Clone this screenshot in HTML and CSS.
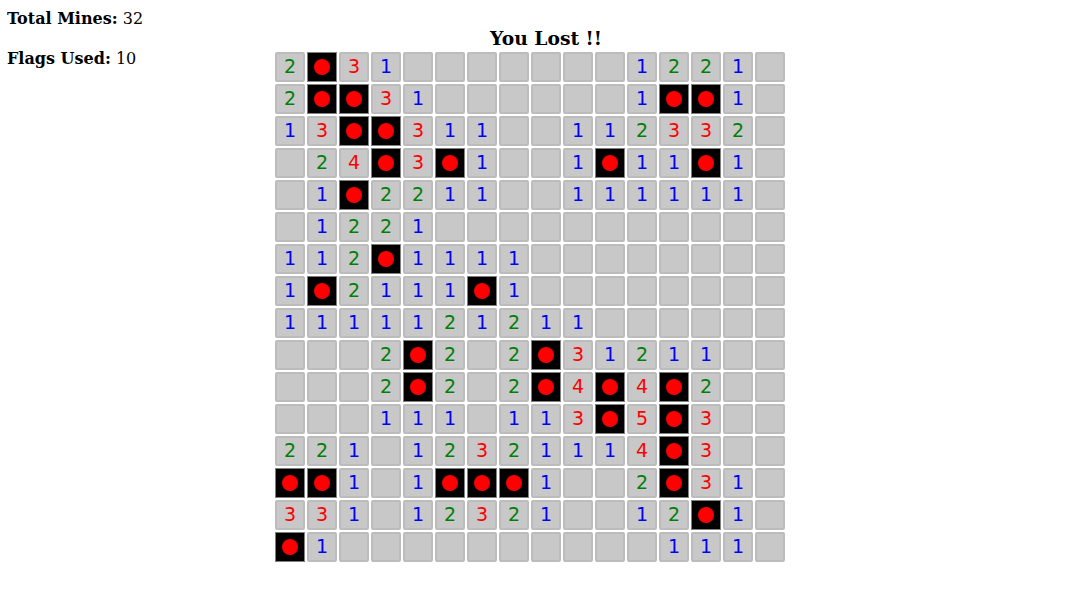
FILE: index.html
```html
<!DOCTYPE html>
<html>
<head>
  <title>Minesweeper</title>
  <link rel="stylesheet" href="styles.css">
</head>
<body>
  <div class="page">
    <div class="stats">
      <p><b>Total Mines:</b> 32</p>
      <p><b>Flags Used:</b> 10</p>
    </div>
    <div class="game">
      <h2 class="status">You Lost !!</h2>
      <div class="board">
        <div class="cell two">2</div><div class="cell mine"><span class="dot"></span></div><div class="cell three">3</div><div class="cell one">1</div><div class="cell"></div><div class="cell"></div><div class="cell"></div><div class="cell"></div><div class="cell"></div><div class="cell"></div><div class="cell"></div><div class="cell one">1</div><div class="cell two">2</div><div class="cell two">2</div><div class="cell one">1</div><div class="cell"></div>
        <div class="cell two">2</div><div class="cell mine"><span class="dot"></span></div><div class="cell mine"><span class="dot"></span></div><div class="cell three">3</div><div class="cell one">1</div><div class="cell"></div><div class="cell"></div><div class="cell"></div><div class="cell"></div><div class="cell"></div><div class="cell"></div><div class="cell one">1</div><div class="cell mine"><span class="dot"></span></div><div class="cell mine"><span class="dot"></span></div><div class="cell one">1</div><div class="cell"></div>
        <div class="cell one">1</div><div class="cell three">3</div><div class="cell mine"><span class="dot"></span></div><div class="cell mine"><span class="dot"></span></div><div class="cell three">3</div><div class="cell one">1</div><div class="cell one">1</div><div class="cell"></div><div class="cell"></div><div class="cell one">1</div><div class="cell one">1</div><div class="cell two">2</div><div class="cell three">3</div><div class="cell three">3</div><div class="cell two">2</div><div class="cell"></div>
        <div class="cell"></div><div class="cell two">2</div><div class="cell three">4</div><div class="cell mine"><span class="dot"></span></div><div class="cell three">3</div><div class="cell mine"><span class="dot"></span></div><div class="cell one">1</div><div class="cell"></div><div class="cell"></div><div class="cell one">1</div><div class="cell mine"><span class="dot"></span></div><div class="cell one">1</div><div class="cell one">1</div><div class="cell mine"><span class="dot"></span></div><div class="cell one">1</div><div class="cell"></div>
        <div class="cell"></div><div class="cell one">1</div><div class="cell mine"><span class="dot"></span></div><div class="cell two">2</div><div class="cell two">2</div><div class="cell one">1</div><div class="cell one">1</div><div class="cell"></div><div class="cell"></div><div class="cell one">1</div><div class="cell one">1</div><div class="cell one">1</div><div class="cell one">1</div><div class="cell one">1</div><div class="cell one">1</div><div class="cell"></div>
        <div class="cell"></div><div class="cell one">1</div><div class="cell two">2</div><div class="cell two">2</div><div class="cell one">1</div><div class="cell"></div><div class="cell"></div><div class="cell"></div><div class="cell"></div><div class="cell"></div><div class="cell"></div><div class="cell"></div><div class="cell"></div><div class="cell"></div><div class="cell"></div><div class="cell"></div>
        <div class="cell one">1</div><div class="cell one">1</div><div class="cell two">2</div><div class="cell mine"><span class="dot"></span></div><div class="cell one">1</div><div class="cell one">1</div><div class="cell one">1</div><div class="cell one">1</div><div class="cell"></div><div class="cell"></div><div class="cell"></div><div class="cell"></div><div class="cell"></div><div class="cell"></div><div class="cell"></div><div class="cell"></div>
        <div class="cell one">1</div><div class="cell mine"><span class="dot"></span></div><div class="cell two">2</div><div class="cell one">1</div><div class="cell one">1</div><div class="cell one">1</div><div class="cell mine"><span class="dot"></span></div><div class="cell one">1</div><div class="cell"></div><div class="cell"></div><div class="cell"></div><div class="cell"></div><div class="cell"></div><div class="cell"></div><div class="cell"></div><div class="cell"></div>
        <div class="cell one">1</div><div class="cell one">1</div><div class="cell one">1</div><div class="cell one">1</div><div class="cell one">1</div><div class="cell two">2</div><div class="cell one">1</div><div class="cell two">2</div><div class="cell one">1</div><div class="cell one">1</div><div class="cell"></div><div class="cell"></div><div class="cell"></div><div class="cell"></div><div class="cell"></div><div class="cell"></div>
        <div class="cell"></div><div class="cell"></div><div class="cell"></div><div class="cell two">2</div><div class="cell mine"><span class="dot"></span></div><div class="cell two">2</div><div class="cell"></div><div class="cell two">2</div><div class="cell mine"><span class="dot"></span></div><div class="cell three">3</div><div class="cell one">1</div><div class="cell two">2</div><div class="cell one">1</div><div class="cell one">1</div><div class="cell"></div><div class="cell"></div>
        <div class="cell"></div><div class="cell"></div><div class="cell"></div><div class="cell two">2</div><div class="cell mine"><span class="dot"></span></div><div class="cell two">2</div><div class="cell"></div><div class="cell two">2</div><div class="cell mine"><span class="dot"></span></div><div class="cell three">4</div><div class="cell mine"><span class="dot"></span></div><div class="cell three">4</div><div class="cell mine"><span class="dot"></span></div><div class="cell two">2</div><div class="cell"></div><div class="cell"></div>
        <div class="cell"></div><div class="cell"></div><div class="cell"></div><div class="cell one">1</div><div class="cell one">1</div><div class="cell one">1</div><div class="cell"></div><div class="cell one">1</div><div class="cell one">1</div><div class="cell three">3</div><div class="cell mine"><span class="dot"></span></div><div class="cell three">5</div><div class="cell mine"><span class="dot"></span></div><div class="cell three">3</div><div class="cell"></div><div class="cell"></div>
        <div class="cell two">2</div><div class="cell two">2</div><div class="cell one">1</div><div class="cell"></div><div class="cell one">1</div><div class="cell two">2</div><div class="cell three">3</div><div class="cell two">2</div><div class="cell one">1</div><div class="cell one">1</div><div class="cell one">1</div><div class="cell three">4</div><div class="cell mine"><span class="dot"></span></div><div class="cell three">3</div><div class="cell"></div><div class="cell"></div>
        <div class="cell mine"><span class="dot"></span></div><div class="cell mine"><span class="dot"></span></div><div class="cell one">1</div><div class="cell"></div><div class="cell one">1</div><div class="cell mine"><span class="dot"></span></div><div class="cell mine"><span class="dot"></span></div><div class="cell mine"><span class="dot"></span></div><div class="cell one">1</div><div class="cell"></div><div class="cell"></div><div class="cell two">2</div><div class="cell mine"><span class="dot"></span></div><div class="cell three">3</div><div class="cell one">1</div><div class="cell"></div>
        <div class="cell three">3</div><div class="cell three">3</div><div class="cell one">1</div><div class="cell"></div><div class="cell one">1</div><div class="cell two">2</div><div class="cell three">3</div><div class="cell two">2</div><div class="cell one">1</div><div class="cell"></div><div class="cell"></div><div class="cell one">1</div><div class="cell two">2</div><div class="cell mine"><span class="dot"></span></div><div class="cell one">1</div><div class="cell"></div>
        <div class="cell mine"><span class="dot"></span></div><div class="cell one">1</div><div class="cell"></div><div class="cell"></div><div class="cell"></div><div class="cell"></div><div class="cell"></div><div class="cell"></div><div class="cell"></div><div class="cell"></div><div class="cell"></div><div class="cell"></div><div class="cell one">1</div><div class="cell one">1</div><div class="cell one">1</div><div class="cell"></div>
      </div>
    </div>
  </div>
</body>
</html>
```

FILE: styles.css
```css
body {
  margin: 8px 7px;
  font-family: "DejaVu Serif", serif;
  font-size: 16px;
  color: #000;
  background-color: #fff;
}
.page {
  display: flex;
}
.stats {
  width: 268px;
  flex-shrink: 0;
  padding-top: 1px;
}
.stats p {
  margin: 0 0 20px 0;
  line-height: 20px;
}
.game {
  width: 542px;
}
.status {
  margin: 19px 0 3px 0;
  font-size: 18.7px;
  line-height: 22px;
  text-align: center;
}
.board {
  display: grid;
  grid-template-columns: repeat(16, 30px);
  grid-auto-rows: 30px;
  gap: 2px;
}
.cell {
  display: flex;
  align-items: center;
  justify-content: center;
  box-sizing: border-box;
  padding-bottom: 3px;
  font-family: "DejaVu Sans", sans-serif;
  font-size: 19px;
  background-color: #c8c8c8;
  border: 2px solid #bcbcbc;
  border-radius: 2px;
}
.one {
  color: #0000ff;
}
.two {
  color: #008000;
}
.three {
  color: #ff0000;
}
.mine {
  padding-bottom: 0;
  background-color: #000;
  border: 1px solid #808080;
  border-radius: 0;
}
.dot {
  width: 16px;
  height: 16px;
  border-radius: 50%;
  background-color: #ff0000;
}
```
